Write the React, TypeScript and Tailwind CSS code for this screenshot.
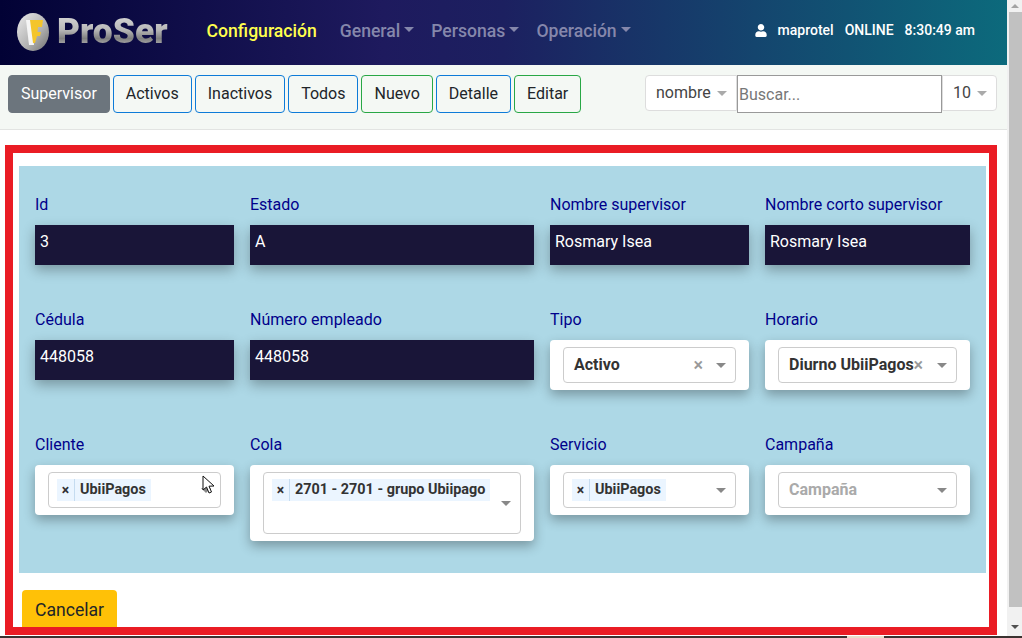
import React from "react";
import { FaUser } from "react-icons/fa";

function Caret({ className = "" }: { className?: string }) {
  return <span className={"inline-block w-0 h-0 border-x-[5px] border-x-transparent border-t-[5px] " + className} />;
}

function Btn({ label, kind }: { label: string; kind: "gray" | "blue" | "green" }) {
  const cls =
    kind === "gray"
      ? "bg-[#6c757d] border-[#6c757d] text-white"
      : kind === "blue"
      ? "border-[#0d7bd8] text-[#212529]"
      : "border-[#28a745] text-[#212529]";
  return <button className={"h-[38px] px-3 rounded border text-base leading-6 " + cls}>{label}</button>;
}

function NavItem({ label }: { label: string }) {
  return (
    <span className="flex items-center gap-[4px] text-[17.6px] font-medium text-[#8587ab]">
      {label}
      <Caret className="border-t-[#8587ab] mb-[2px]" />
    </span>
  );
}

function Label({ children }: { children: React.ReactNode }) {
  return <div className="h-[33px] pt-px leading-6 text-base text-[#00008b]">{children}</div>;
}

function TextField({ label, value }: { label: string; value: string }) {
  return (
    <div>
      <Label>{label}</Label>
      <div className="h-10 bg-[#191538] text-white px-[5px] pt-[5px] text-base leading-6 shadow-[0_5px_12px_rgba(0,0,0,0.3)]">
        {value}
      </div>
    </div>
  );
}

function Tag({ text }: { text: string }) {
  return (
    <span className="inline-flex shrink-0 h-[22px] items-center bg-[#ebf5ff] text-[14.4px] font-bold text-[#333] whitespace-nowrap">
      <span className="w-[18px] h-full flex items-center justify-center border-r border-r-[#c5dcf0] text-[14px]">×</span>
      <span className="pl-[5px] pr-[5px] leading-[20px] pb-px">{text}</span>
    </span>
  );
}

function SelectField({
  label,
  value,
  placeholder,
  tag,
  clear,
  tall,
  clearClass = "",
}: {
  label: string;
  value?: string;
  placeholder?: string;
  tag?: string;
  clear?: boolean;
  tall?: boolean;
  clearClass?: string;
}) {
  return (
    <div>
      <Label>{label}</Label>
      <div className={"bg-white rounded px-[13px] pt-[7px] shadow-[0_5px_12px_rgba(0,0,0,0.3)] " + (tall ? "h-[76px]" : "h-[50px]")}>
        <div className={"border border-[#ccc] rounded flex " + (tall ? "h-[62px]" : "h-9")}>
          <div className={"flex-1 min-w-0 flex " + (tag ? "pl-2 pt-[6px] items-start" : "pl-[10px] items-center")}>
            {tag && <Tag text={tag} />}
            {value && <span className="text-base font-bold text-[#333] whitespace-nowrap">{value}</span>}
            {placeholder && <span className="text-base font-bold text-[#aaa]">{placeholder}</span>}
          </div>
          {clear && <span className={"self-center text-[18px] font-medium leading-none text-[#999] " + clearClass}>×</span>}
          <div className="w-[30px] flex items-center justify-center shrink-0 pl-[2px]">
            <Caret className="border-t-[#888]" />
          </div>
        </div>
      </div>
    </div>
  );
}

export default function App() {
  return (
    <div className="relative w-[1022px] h-[638px] overflow-hidden bg-white flex flex-col font-['Roboto',sans-serif]">
      <div className="h-[636px] flex shrink-0">
        <div className="w-[1007px] shrink-0 flex flex-col">
          <nav className="h-[65px] shrink-0 flex items-center bg-[linear-gradient(90deg,#020235_0%,#1e1a5e_38%,#1c2060_50%,#0c6a7c_100%)]">
            <div className="ml-[16px] w-[34px] h-[40px] flex items-center mb-[2px]">
              <svg viewBox="0 0 34 40" className="w-[34px] h-[40px]">
                <defs>
                  <linearGradient id="silver" x1="0" y1="0" x2="1" y2="1">
                    <stop offset="0" stopColor="#ececec" />
                    <stop offset="0.6" stopColor="#b0b0b0" />
                    <stop offset="1" stopColor="#6f6f6f" />
                  </linearGradient>
                </defs>
                <ellipse cx="17" cy="20" rx="16" ry="19" fill="url(#silver)" />
                <path d="M10 8 L15 8 L18 33 L13 33 Z" fill="#f5f5f5" />
                <path d="M14 8 L27 8 L26 15 L22 15 L21.5 20 L25 20 L24 24 L21 24 L19 31 L17 31 Z" fill="#f4c52c" />
              </svg>
            </div>
            <span className="ml-[7px] mb-[2px] text-[35.4px] leading-none font-black text-transparent bg-clip-text bg-[linear-gradient(180deg,#d8d8d8_0%,#b8b8b8_45%,#808080_70%,#c8c8c8_100%)]">
              ProSer
            </span>
            <span className="ml-[39px] mb-[3px] text-[17.6px] font-medium text-[#ffff4d]">Configuración</span>
            <div className="ml-[23px] mb-[3px] flex gap-[17px]">
              <NavItem label="General" />
              <NavItem label="Personas" />
              <NavItem label="Operación" />
            </div>
            <div className="ml-auto mr-[32px] mb-[4px] flex items-center text-[14px] font-medium text-white">
              <FaUser className="w-3 h-[13px] mr-[11px]" />
              <span>maprotel</span>
              <span className="ml-[11px]">ONLINE</span>
              <span className="ml-[11px]">8:30:49 am</span>
            </div>
          </nav>

          <div className="h-[65px] shrink-0 flex items-start pt-[10px] px-[8px] bg-[#f4f8f4] border-b border-b-[#e2e4e2]">
            <div className="flex gap-[3px]">
              <Btn label="Supervisor" kind="gray" />
              <Btn label="Activos" kind="blue" />
              <Btn label="Inactivos" kind="blue" />
              <Btn label="Todos" kind="blue" />
              <Btn label="Nuevo" kind="green" />
              <Btn label="Detalle" kind="blue" />
              <Btn label="Editar" kind="green" />
            </div>
            <div className="ml-auto mr-[2px] flex text-base text-[#444]">
              <div className="w-[92px] h-[36px] bg-white border border-[#ddd] rounded-l flex items-center pl-[10px] gap-[6px]">
                nombre <Caret className="border-t-[#aaa]" />
              </div>
              <input
                placeholder="Buscar..."
                className="w-[205px] h-[38px] bg-white border border-[#999] px-[1px] outline-none placeholder:text-[#777]"
              />
              <div className="w-[55px] h-[36px] bg-white border border-[#ddd] rounded-r flex items-center pl-[10px] gap-[6px]">
                10 <Caret className="border-t-[#aaa]" />
              </div>
            </div>
          </div>

          <div className="ml-[5px] mt-[15px] w-[992px] h-[490px] border-[8px] border-[#ea1c24] overflow-hidden bg-white">
            <div className="ml-[6px] mt-[13px] w-[967px] h-[407px] bg-[#add8e6] pl-4 pt-[26px]">
              <div className="grid grid-cols-[199px_284px_199px_205px] gap-x-4 gap-y-[42px] items-start">
                <TextField label="Id" value="3" />
                <TextField label="Estado" value="A" />
                <TextField label="Nombre supervisor" value="Rosmary Isea" />
                <TextField label="Nombre corto supervisor" value="Rosmary Isea" />
                <TextField label="Cédula" value="448058" />
                <TextField label="Número empleado" value="448058" />
                <SelectField label="Tipo" value="Activo" clear clearClass="mr-[2px]" />
                <SelectField label="Horario" value="Diurno UbiiPagos" clear clearClass="mr-[3px]" />
                <SelectField label="Cliente" tag="UbiiPagos" />
                <SelectField label="Cola" tag="2701 - 2701 - grupo Ubiipago" tall />
                <SelectField label="Servicio" tag="UbiiPagos" />
                <SelectField label="Campaña" placeholder="Campaña" />
              </div>
            </div>
            <button className="ml-[9px] mt-[17px] h-[46px] pt-[1px] pb-[8px] w-[95px] bg-[#ffc107] rounded text-[17.6px] leading-6 text-[#212529]">
              Cancelar
            </button>
          </div>
        </div>

        <div className="flex-1 bg-[#f1f1f1] flex flex-col items-center">
          <div className="h-3 flex items-center justify-center">
            <span className="w-0 h-0 border-x-[4px] border-x-transparent border-b-[4px] border-b-[#a3a3a3]" />
          </div>
          <div className="ml-[2px] w-[13px] h-[595px] bg-[#c1c1c1]" />
          <div className="mt-[15px] h-[10px] flex items-center justify-center">
            <span className="w-0 h-0 border-x-[4px] border-x-transparent border-t-[4px] border-t-[#505050]" />
          </div>
        </div>
      </div>
      <div className="h-[2px] bg-[#3a3230] flex">
        <div className="ml-[847px] w-[37px] bg-[#e8dcc8]" />
      </div>
      <svg viewBox="0 0 13 20" className="absolute left-[202px] top-[475px] w-[13px] h-[20px]">
        <path d="M1 1 L1 15 L4.5 12 L7 18 L9.5 17 L7 11.2 L12 11 Z" fill="#fff" stroke="#111" strokeWidth="1" />
      </svg>
    </div>
  );
}
